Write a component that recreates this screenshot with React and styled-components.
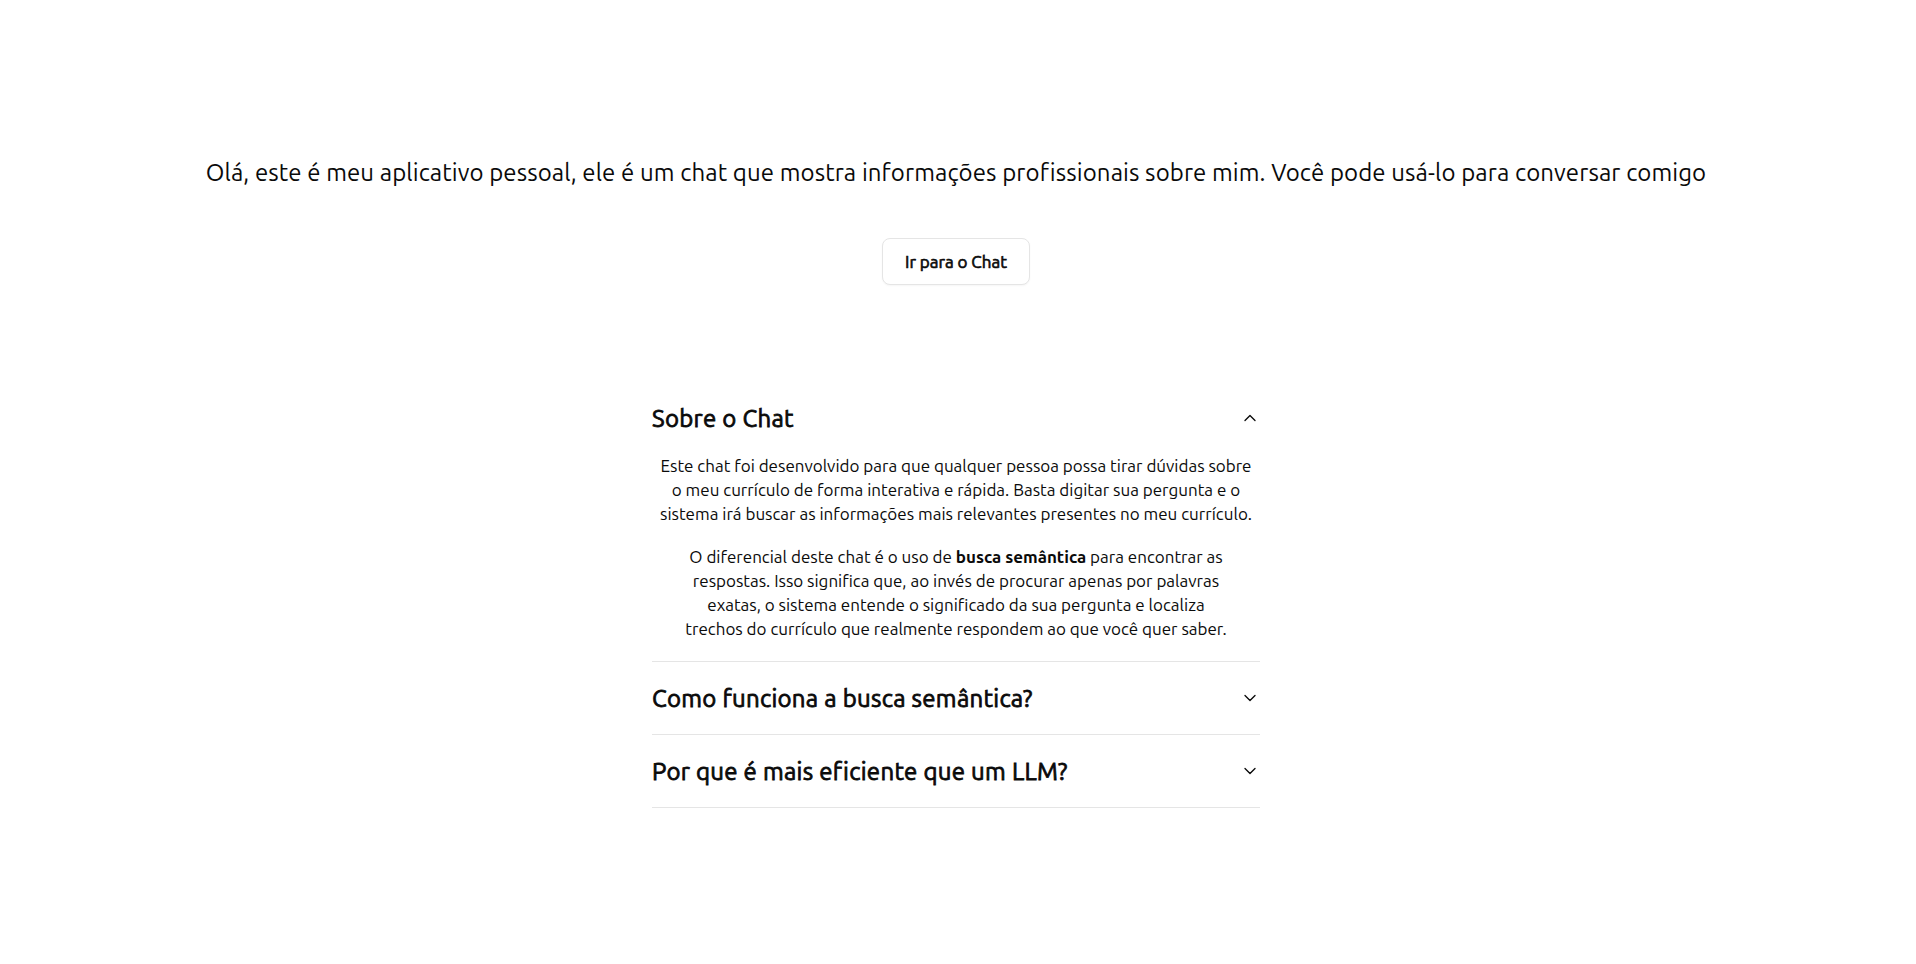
import React, { useState } from "react";
import styled, { createGlobalStyle } from "styled-components";
import { ChevronDown } from "lucide-react";

const getItems = () => [
  {
    id: "sobre",
    title: "Sobre o Chat",
    body: (
      <>
        <Paragraph>
          Este chat foi desenvolvido para que qualquer pessoa possa tirar dúvidas sobre
          <br />o meu currículo de forma interativa e rápida. Basta digitar sua pergunta e o
          <br />sistema irá buscar as informações mais relevantes presentes no meu currículo.
        </Paragraph>
        <Paragraph>
          O diferencial deste chat é o uso de <strong>busca semântica</strong> para encontrar as
          <br />respostas. Isso significa que, ao invés de procurar apenas por palavras
          <br />exatas, o sistema entende o significado da sua pergunta e localiza
          <br />trechos do currículo que realmente respondem ao que você quer saber.
        </Paragraph>
      </>
    ),
  },
  {
    id: "busca",
    title: "Como funciona a busca semântica?",
    body: (
      <Paragraph>
        O texto do currículo é dividido em trechos e transformado em vetores que representam o
        seu significado. A sua pergunta passa pelo mesmo processo e os trechos mais próximos
        são usados para montar a resposta.
      </Paragraph>
    ),
  },
  {
    id: "llm",
    title: "Por que é mais eficiente que um LLM?",
    body: (
      <Paragraph>
        Como a resposta vem diretamente de trechos reais do currículo, não há invenção de
        informações e a busca é muito mais rápida e barata.
      </Paragraph>
    ),
  },
];

const App = () => {
  const [open, setOpen] = useState("sobre");
  const items = getItems();

  const toggle = (id) => {
    setOpen(open === id ? null : id);
  };

  return (
    <>
      <GlobalStyle />
      <Page>
        <Intro>
          Olá, este é meu aplicativo pessoal, ele é um chat que mostra informações profissionais
          sobre mim. Você pode usá-lo para conversar comigo
        </Intro>
        <ChatButton type="button">Ir para o Chat</ChatButton>

        <Accordion>
          {items.map((item) => (
            <Item key={item.id}>
              <Trigger type="button" onClick={() => toggle(item.id)}>
                <span>{item.title}</span>
                <Chevron $open={open === item.id} size={20} strokeWidth={1.6} />
              </Trigger>
              {open === item.id && <Content>{item.body}</Content>}
            </Item>
          ))}
        </Accordion>
      </Page>
    </>
  );
};

export default App;

// Styled Components
const GlobalStyle = createGlobalStyle`
  * {
    box-sizing: border-box;
  }

  body {
    margin: 0;
    background: #ffffff;
    color: #0a0a0a;
    font-family: "Ubuntu", Lato, "Noto Sans", sans-serif;
  }
`;

const Page = styled.main`
  min-height: 100vh;
  display: flex;
  flex-direction: column;
  align-items: center;
  padding: 157px 4px 0 0;
`;

const Intro = styled.p`
  margin: 0;
  font-size: 24px;
  line-height: 32px;
  letter-spacing: 0.1px;
  text-align: center;
  white-space: nowrap;
`;

const ChatButton = styled.button`
  margin-top: 49px;
  height: 47px;
  padding: 0 22px;
  border: 1px solid #e5e5e5;
  border-radius: 8px;
  background: #ffffff;
  box-shadow: 0 1px 2px rgba(0, 0, 0, 0.04);
  font-family: inherit;
  font-size: 17px;
  font-weight: 400;
  -webkit-text-stroke: 0.65px #0a0a0a;
  color: #0a0a0a;
  cursor: pointer;
`;

const Accordion = styled.div`
  width: 608px;
  margin-top: 97px;
`;

const Item = styled.div`
  border-bottom: 1px solid #e5e5e5;
`;

const Trigger = styled.button`
  width: 100%;
  height: 72px;
  display: flex;
  align-items: center;
  justify-content: space-between;
  padding: 0;
  border: none;
  background: none;
  font-family: inherit;
  font-size: 24px;
  font-weight: 400;
  letter-spacing: 0.3px;
  -webkit-text-stroke: 0.8px #0a0a0a;
  color: #0a0a0a;
  text-align: left;
  cursor: pointer;
`;

const Chevron = styled(ChevronDown)`
  flex-shrink: 0;
  color: #0a0a0a;
  transform: rotate(${(p) => (p.$open ? "180deg" : "0deg")});
`;

const Content = styled.div`
  padding-bottom: 20px;
  text-align: center;
  font-size: 17px;
  line-height: 24px;
`;

const Paragraph = styled.p`
  margin: 0;

  & + & {
    margin-top: 19px;
  }

  strong {
    font-weight: 700;
  }
`;
